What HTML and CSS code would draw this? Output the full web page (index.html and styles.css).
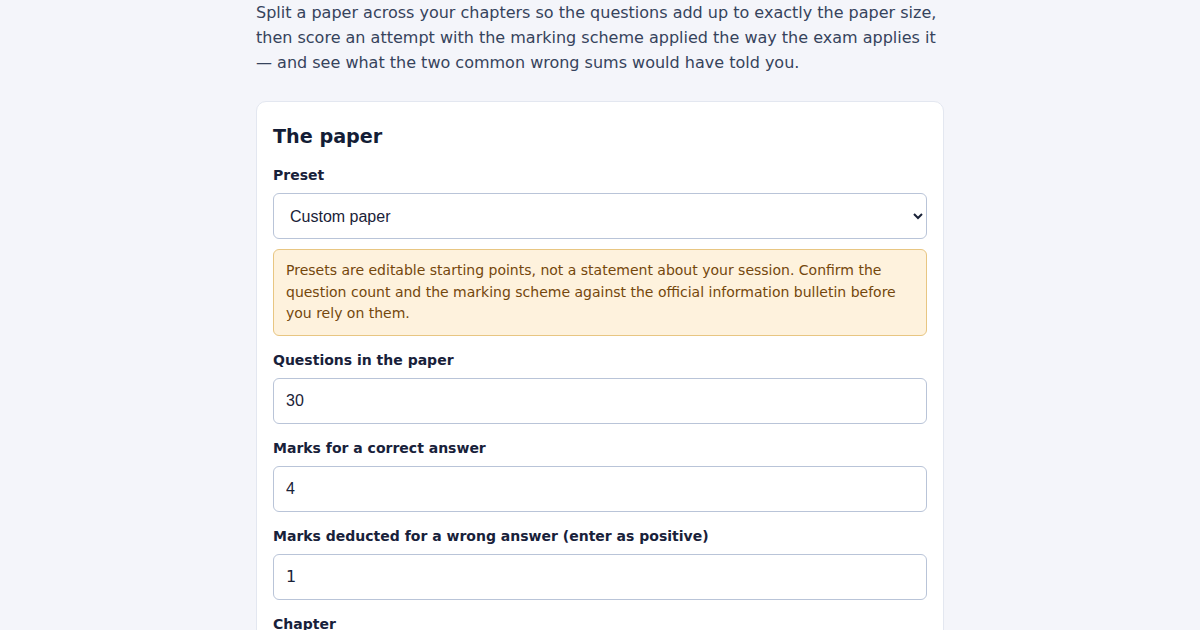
FILE: index.html
```html
<!DOCTYPE html>
<html lang="en">
<head>
<meta charset="utf-8">
<title>Paper split</title>
<link rel="stylesheet" href="styles.css">
</head>
<body>
<main class="page">
  <p class="intro">Split a paper across your chapters so the questions add up to exactly the paper size, then score an attempt with the marking scheme applied the way the exam applies it — and see what the two common wrong sums would have told you.</p>
  <section class="card">
    <h2 class="card-title">The paper</h2>
    <div class="field">
      <label class="label" for="preset">Preset</label>
      <select id="preset" class="control select">
        <option>Custom paper</option>
      </select>
      <div class="notice">Presets are editable starting points, not a statement about your session. Confirm the question count and the marking scheme against the official information bulletin before you rely on them.</div>
    </div>
    <div class="field">
      <label class="label" for="q">Questions in the paper</label>
      <input id="q" class="control" type="text" value="30">
    </div>
    <div class="field">
      <label class="label" for="c">Marks for a correct answer</label>
      <input id="c" class="control" type="text" value="4">
    </div>
    <div class="field field-tight">
      <label class="label" for="w">Marks deducted for a wrong answer (enter as positive)</label>
      <input id="w" class="control control-alt" type="text" value="1">
    </div>
    <div class="field">
      <label class="label" for="ch">Chapter</label>
      <input id="ch" class="control" type="text" value="">
    </div>
  </section>
</main>
</body>
</html>
```

FILE: styles.css
```css
html, body {
  margin: 0;
  padding: 0;
  background: #f4f5fa;
}
body {
  font-family: "DejaVu Sans", sans-serif;
  color: #1a2238;
}
.page {
  width: 688px;
  margin: 0 auto;
}
.intro {
  margin: 0 0 26px;
  font-size: 16px;
  line-height: 25px;
  color: #36435c;
}
.card {
  background: #ffffff;
  border: 1px solid #e3e7f0;
  border-radius: 10px;
  padding: 16px;
}
.card-title {
  margin: 5px 0 14px;
  font-size: 19.2px;
  line-height: 28px;
  font-weight: bold;
  color: #141d36;
}
.field {
  display: flex;
  flex-direction: column;
  margin-bottom: 14px;
}
.label {
  font-size: 14px;
  line-height: 20px;
  font-weight: bold;
  color: #18213a;
  margin-bottom: 8px;
}
.control {
  box-sizing: border-box;
  width: 100%;
  height: 46px;
  border: 1px solid #b9c4d8;
  border-radius: 6px;
  background: #ffffff;
  padding: 0 12px;
  font-family: "Liberation Sans", Arial, sans-serif;
  font-size: 16px;
  color: #1a2238;
  outline: none;
}
.control-alt {
  font-family: "DejaVu Sans", sans-serif;
}
.select {
  padding: 0 12px;
  appearance: auto;
}
.notice {
  margin-top: 10px;
  background: #fef2dd;
  border: 1px solid #e8c682;
  border-radius: 6px;
  padding: 10px 12px;
  font-size: 14px;
  line-height: 21.5px;
  color: #74470c;
}
```
